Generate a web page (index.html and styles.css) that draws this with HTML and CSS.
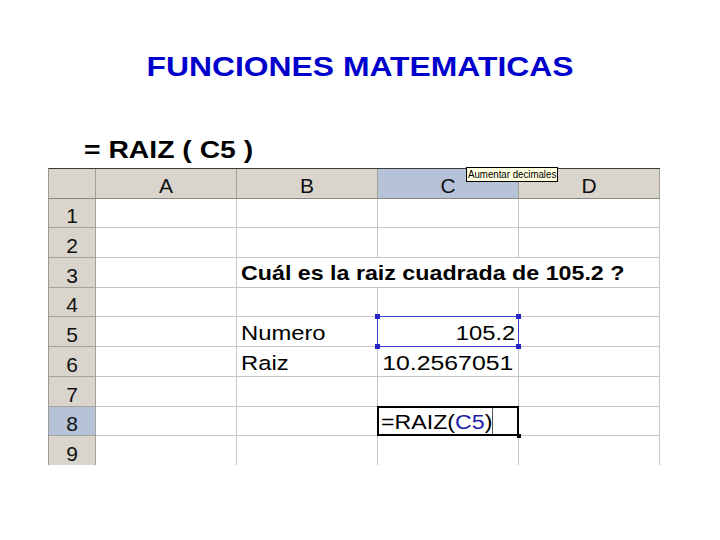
FILE: index.html
```html
<!DOCTYPE html>
<html lang="es">
<head>
<meta charset="utf-8">
<title>Funciones matematicas</title>
<link rel="stylesheet" href="styles.css">
</head>
<body>
<div class="page">
  <h1 class="title"><span class="t">FUNCIONES MATEMATICAS</span></h1>
  <p class="formula"><span class="t">= RAIZ ( C5 )</span></p>

  <div class="sheet">
    <div class="c hd"></div>
    <div class="c hd">A</div>
    <div class="c hd">B</div>
    <div class="c hd sel">C</div>
    <div class="c hd">D</div>

    <div class="c hd rh">1</div><div class="c"></div><div class="c"></div><div class="c"></div><div class="c"></div>
    <div class="c hd rh">2</div><div class="c"></div><div class="c"></div><div class="c"></div><div class="c"></div>
    <div class="c hd rh">3</div><div class="c"></div><div class="c span3 bold"><span class="t">Cuál es la raiz cuadrada de 105.2 ?</span></div>
    <div class="c hd rh">4</div><div class="c"></div><div class="c"></div><div class="c"></div><div class="c"></div>
    <div class="c hd rh">5</div><div class="c"></div><div class="c"><span class="t">Numero</span></div>
    <div class="c r"><span class="t">105.2</span>
      <div class="selbox"><i class="h tl"></i><i class="h tr"></i><i class="h bl"></i><i class="h br"></i></div>
    </div>
    <div class="c"></div>
    <div class="c hd rh">6</div><div class="c"></div><div class="c"><span class="t">Raiz</span></div><div class="c r long"><span class="t">10.2567051</span></div><div class="c"></div>
    <div class="c hd rh">7</div><div class="c"></div><div class="c"></div><div class="c"></div><div class="c"></div>
    <div class="c hd rh sel">8</div><div class="c"></div><div class="c"></div>
    <div class="c active"><span class="t">=RAIZ(<span class="ref">C5</span>)</span>
      <div class="edit"><i class="edit-end"></i><i class="fill"></i></div>
    </div>
    <div class="c"></div>
    <div class="c hd rh last">9</div><div class="c last"></div><div class="c last"></div><div class="c last"></div><div class="c last"></div>

    <div class="tip"><span class="tip-text">Aumentar decimales</span></div>
  </div>
</div>
</body>
</html>
```

FILE: styles.css
```css
html, body {
  margin: 0;
  padding: 0;
  background: #ffffff;
}

body {
  font-family: "Liberation Sans", Arial, sans-serif;
  color: #000000;
}

.page {
  width: 720px;
  height: 540px;
  overflow: hidden;
}

.t {
  display: inline-block;
  transform: scaleX(1.16);
  transform-origin: left bottom;
}

.title {
  margin: 0;
  padding-top: 52px;
  font-size: 27px;
  line-height: 30px;
  font-weight: bold;
  color: #0000cc;
  text-align: center;
}

.title .t {
  transform: scaleX(1.18);
  transform-origin: center bottom;
}

.formula {
  margin: 54px 0 0 84px;
  font-size: 24px;
  line-height: 28px;
  font-weight: bold;
  height: 28px;
}

.formula .t {
  transform: scaleX(1.18);
}

.sheet {
  position: relative;
  display: grid;
  grid-template-columns: 47px repeat(4, 141px);
  grid-template-rows: 30px 29px 30px 30px 29px 30px 30px 30px 29px 29px;
  width: max-content;
  margin: 4px 0 0 48px;
  border-left: 1px solid #9c9a96;
  border-top: 1px solid #3a3a3a;
}

.c {
  position: relative;
  box-sizing: border-box;
  display: flex;
  align-items: flex-end;
  padding: 0 3px 3px 4px;
  border-right: 1px solid #c6c6c6;
  border-bottom: 1px solid #c6c6c6;
  font-size: 20.5px;
  line-height: 20.5px;
  white-space: nowrap;
}

.hd {
  justify-content: center;
  padding: 0 0 2px 0;
  background: #d9d5cd;
  border-right: 1px solid #a5a29b;
  border-bottom: 1px solid #8a8782;
  font-size: 21px;
  line-height: 21px;
  color: #111111;
}

.rh {
  border-bottom: 1px solid #a5a29b;
  padding-bottom: 1px;
}

.sel {
  background: #b6c2d8;
}

.last {
  border-bottom: none;
}

.span3 {
  grid-column: span 3;
}

.bold {
  font-weight: bold;
  padding-bottom: 4px;
}

.bold .t {
  transform: scaleX(1.133);
}

.r {
  justify-content: flex-end;
}

.r .t {
  transform-origin: right bottom;
}

.long {
  padding-right: 5px;
}

.long .t {
  transform: scaleX(1.21);
}

.selbox {
  position: absolute;
  top: -1px;
  left: -1px;
  right: -1px;
  bottom: -1px;
  border: 1px solid #3d3dc8;
  z-index: 2;
}

.h {
  position: absolute;
  width: 5px;
  height: 5px;
  background: #2424c8;
}

.tl { left: -3px; top: -3px; }
.tr { right: -3px; top: -3px; }
.bl { left: -3px; bottom: -3px; }
.br { right: -3px; bottom: -3px; }

.active {
  padding-left: 3px;
}

.active .t {
  transform: scaleX(1.13);
}

.ref {
  color: #1c1ca8;
}

.edit {
  position: absolute;
  top: -1px;
  left: -1px;
  right: -1px;
  bottom: -1px;
  border: 2px solid #000000;
  z-index: 2;
}

.edit-end {
  position: absolute;
  left: 113px;
  top: 0;
  bottom: 0;
  width: 1px;
  background: #555555;
}

.fill {
  position: absolute;
  right: -4px;
  bottom: -4px;
  width: 4px;
  height: 4px;
  background: #000000;
}

.tip {
  position: absolute;
  left: 417px;
  top: -2px;
  box-sizing: border-box;
  width: 92px;
  height: 15px;
  padding: 0 0 0 1px;
  background: #ffffe1;
  border: 1px solid #000000;
  font-size: 11px;
  line-height: 13px;
  white-space: nowrap;
  overflow: hidden;
  z-index: 3;
}

.tip-text {
  display: inline-block;
  transform: scaleX(0.88);
  transform-origin: left center;
}
```
